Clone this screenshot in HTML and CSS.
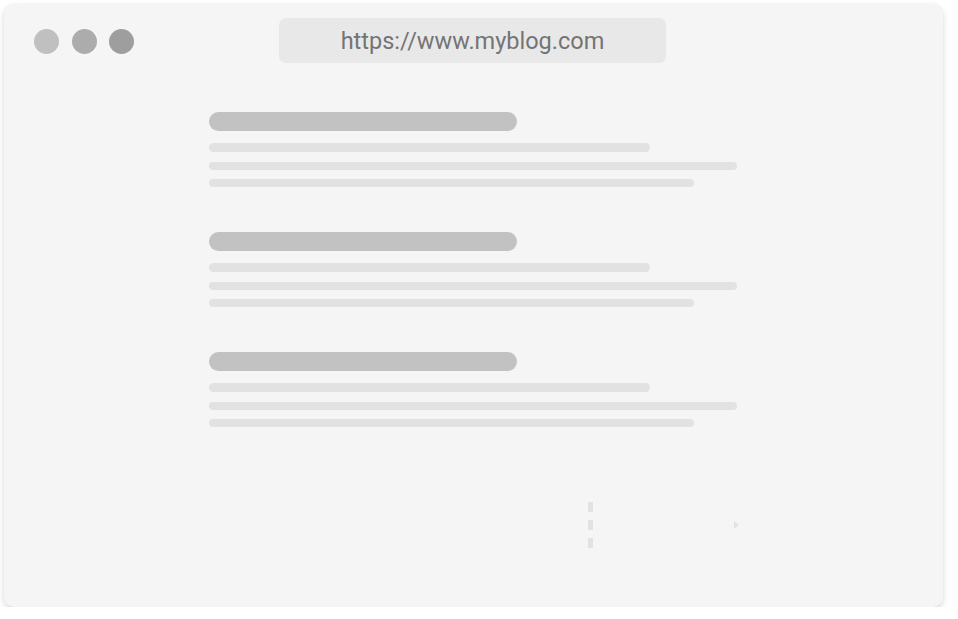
FILE: index.html
```html
<!DOCTYPE html>
<html lang="en">
<head>
<meta charset="utf-8">
<title>Blog skeleton</title>
<link rel="stylesheet" href="styles.css">
</head>
<body>
<div class="window">
  <div class="titlebar">
    <div class="dots">
      <span class="dot dot-1"></span>
      <span class="dot dot-2"></span>
      <span class="dot dot-3"></span>
    </div>
    <div class="url">https://www.myblog.com</div>
  </div>
  <div class="content">
    <div class="post">
      <div class="title-bar"></div>
      <div class="line line-1"></div>
      <div class="line line-2"></div>
      <div class="line line-3"></div>
    </div>
    <div class="post">
      <div class="title-bar"></div>
      <div class="line line-1"></div>
      <div class="line line-2"></div>
      <div class="line line-3"></div>
    </div>
    <div class="post">
      <div class="title-bar"></div>
      <div class="line line-1"></div>
      <div class="line line-2"></div>
      <div class="line line-3"></div>
    </div>
  </div>
  <div class="footer">
    <div class="dashes">
      <span class="dash"></span>
      <span class="dash"></span>
      <span class="dash"></span>
    </div>
    <svg class="caret" width="6" height="10" viewBox="0 0 6 10"><path d="M1 1 L5 4.2 Q5.6 5 5 5.8 L1 9 Z" fill="#e2e2e2"/></svg>
  </div>
</div>
</body>
</html>
```

FILE: styles.css
```css
html, body {
  margin: 0;
  padding: 0;
  background: #ffffff;
}
body {
  font-family: Roboto, "Liberation Sans", Arial, sans-serif;
}
.window {
  margin: 4px 0 0 4px;
  width: 939px;
  height: 603px;
  box-sizing: border-box;
  background: #f5f5f5;
  border-radius: 10px;
  box-shadow: 0 3px 7px rgba(0, 0, 0, 0.14), 0 0 2px rgba(0, 0, 0, 0.05);
  display: flex;
  flex-direction: column;
}
.titlebar {
  display: flex;
  align-items: center;
  padding: 14px 0 0 30px;
  height: 45px;
}
.dots {
  display: flex;
  gap: 12.5px;
  margin-top: 1px;
}
.dot {
  width: 25px;
  height: 25px;
  border-radius: 50%;
  display: block;
}
.dot-1 { background: #c0c0c0; }
.dot-2 { background: #acacac; }
.dot-3 { background: #9e9e9e; }
.url {
  margin-left: 145px;
  width: 387px;
  height: 45px;
  background: #e8e8e8;
  border-radius: 7px;
  display: flex;
  align-items: center;
  justify-content: center;
  color: #747474;
  font-size: 23.5px;
}
.content {
  padding: 49px 0 0 205px;
  display: flex;
  flex-direction: column;
  gap: 45px;
}
.post {
  display: flex;
  flex-direction: column;
}
.title-bar {
  width: 308px;
  height: 19px;
  border-radius: 10px;
  background: #c2c2c2;
}
.line {
  height: 8.5px;
  border-radius: 5px;
  background: #e2e2e2;
}
.line-1 { width: 441px; margin-top: 12px; }
.line-2 { width: 528px; margin-top: 10px; }
.line-3 { width: 485px; margin-top: 8.5px; }
.footer {
  display: flex;
  align-items: center;
  padding: 75px 0 0 584px;
}
.dashes {
  display: flex;
  flex-direction: column;
  gap: 8px;
}
.dash {
  display: block;
  width: 5px;
  height: 10px;
  background: #e2e2e2;
}
.caret {
  margin-left: 140px;
  display: block;
}
```
